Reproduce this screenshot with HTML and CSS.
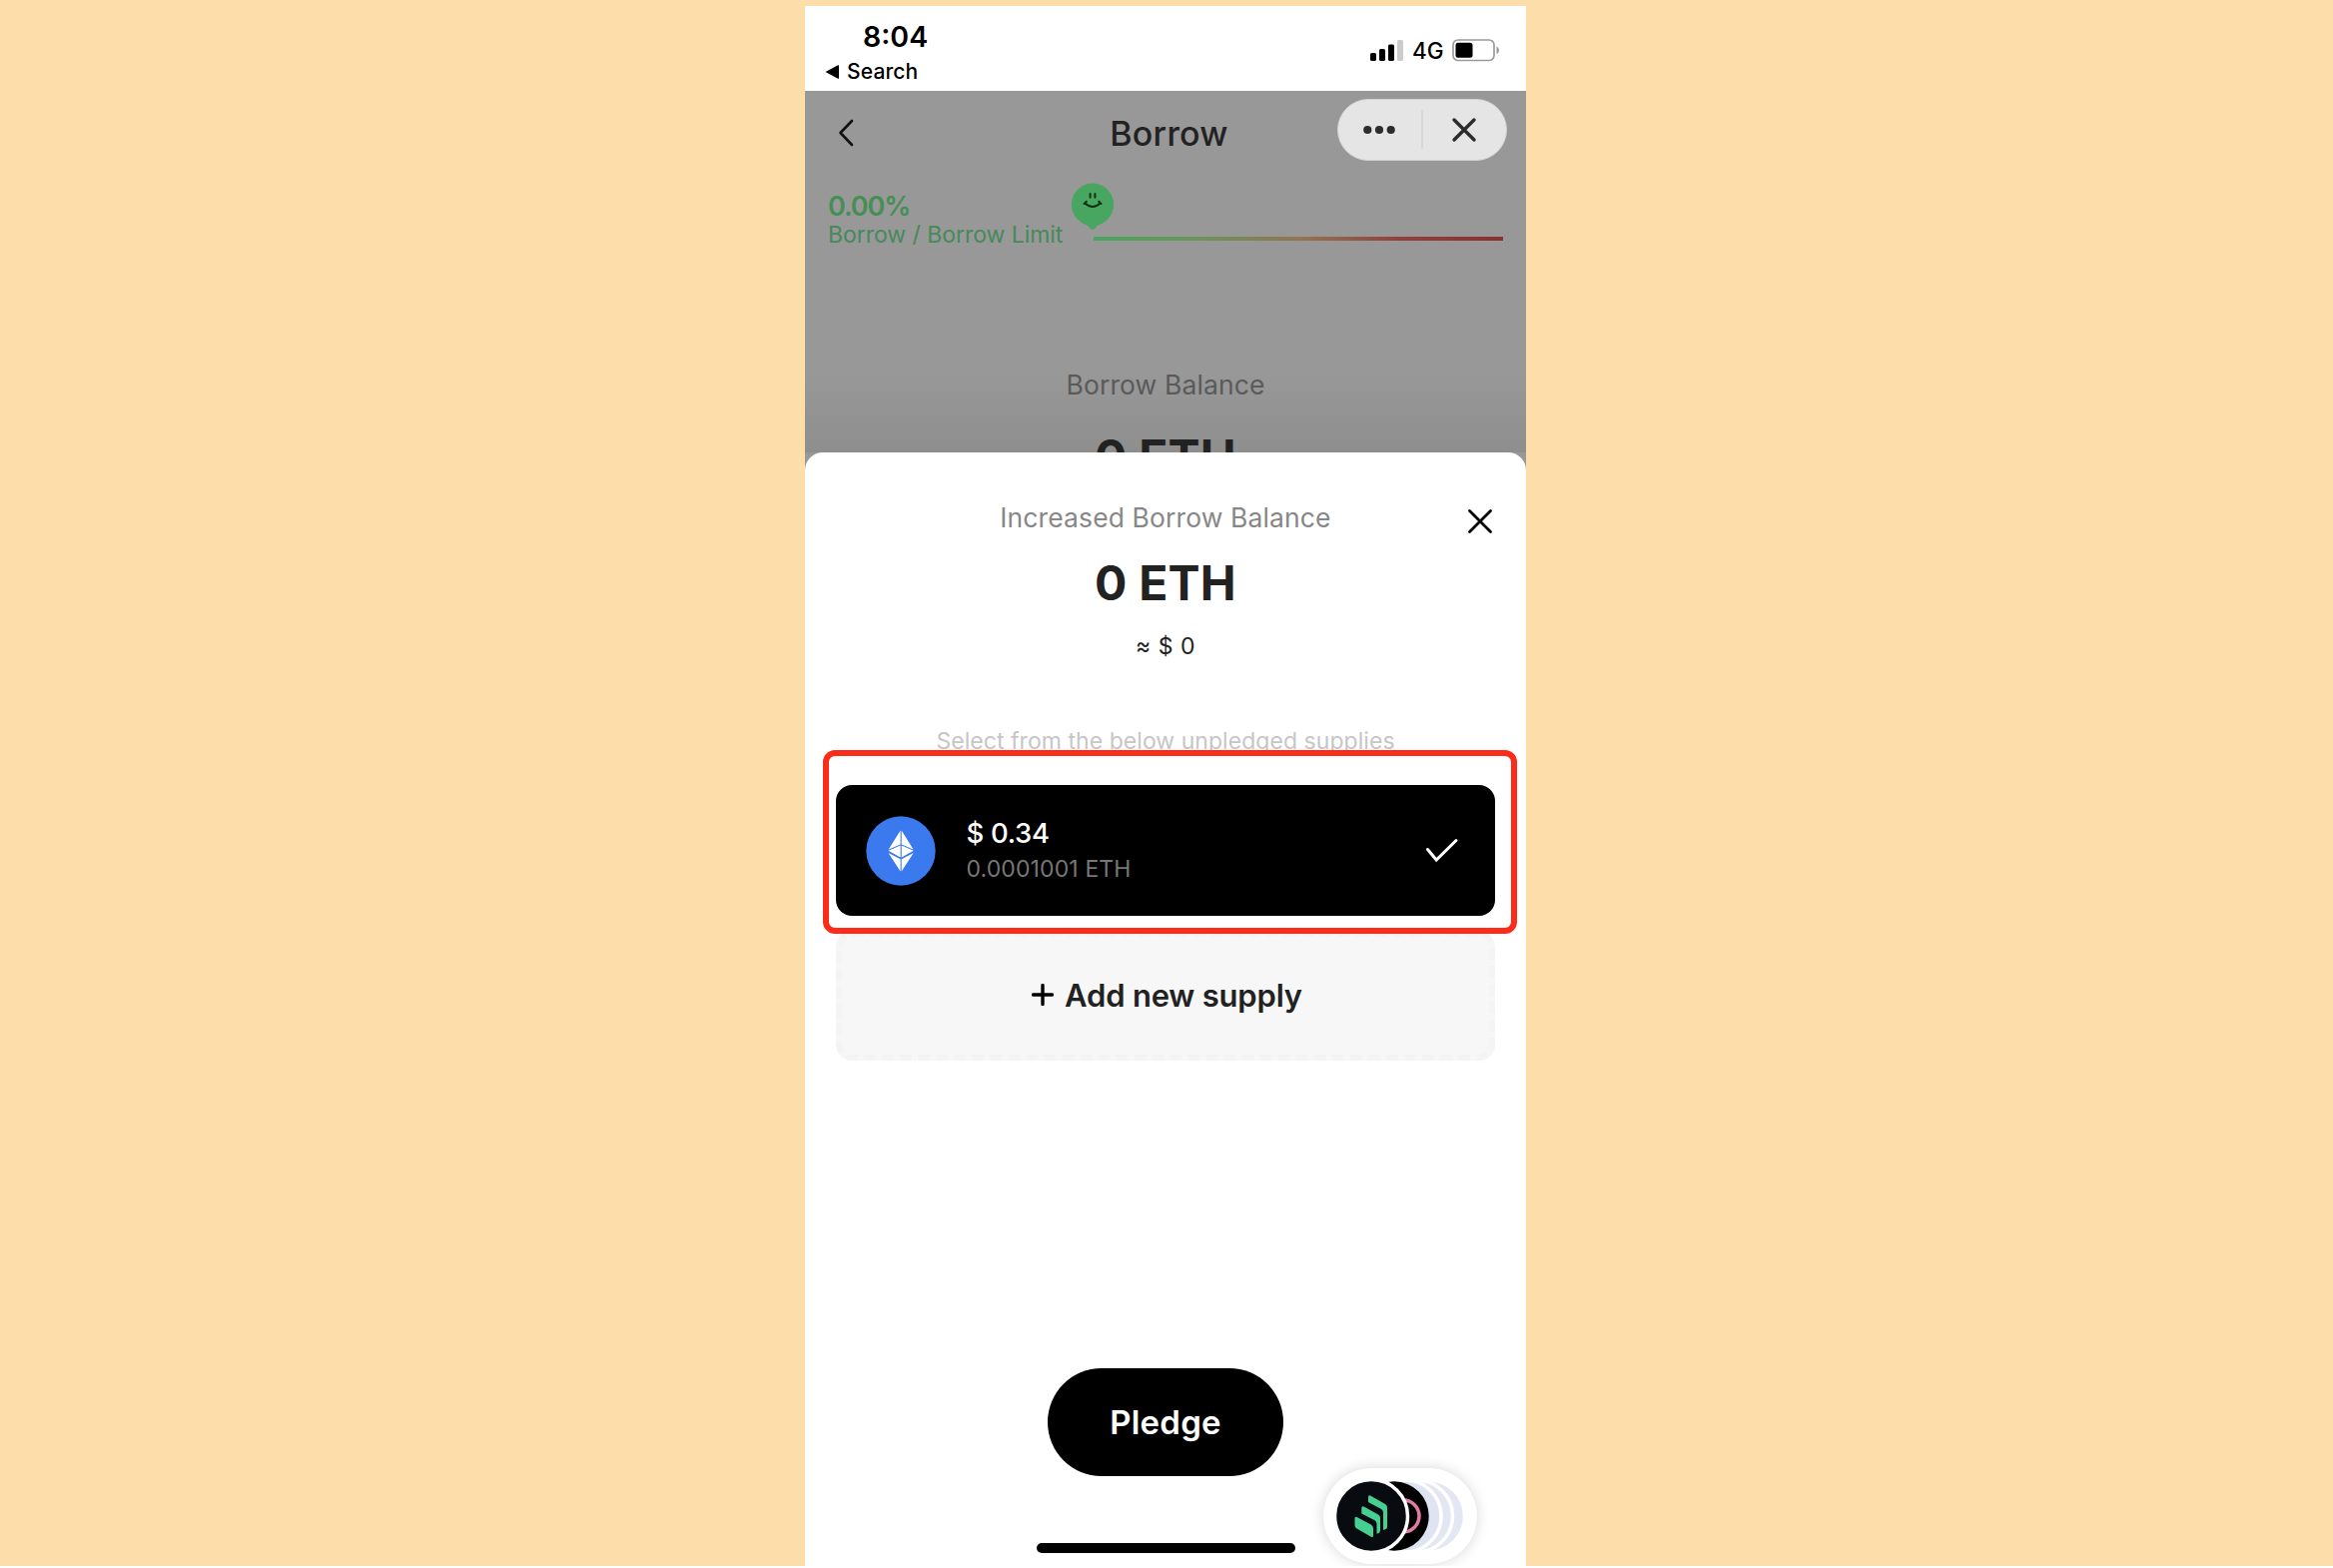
FILE: index.html
```html
<!DOCTYPE html>
<html lang="en">
<head>
<meta charset="utf-8">
<title>Borrow</title>
<link rel="stylesheet" href="styles.css">
</head>
<body>
<main class="phone">
  <header class="status">
    <div class="status-left">
      <div class="clock">8:04</div>
      <div class="back-app">
        <svg width="14" height="14" viewBox="0 0 14 14"><path d="M0.5 7 L13 0.3 Q14 0 14 1.1 V12.9 Q14 14 13 13.7 Z"/></svg>
        <span class="search">Search</span>
      </div>
    </div>
    <div class="status-right">
      <svg width="33" height="21" viewBox="0 0 33 21"><rect x="0" y="13" width="6" height="8" rx="1.6"/><rect x="9" y="9" width="6" height="12" rx="1.6"/><rect x="18" y="4.500" width="6" height="16.500" rx="1.600"/><rect x="27" y="0" width="6" height="21" rx="1.600" fill="#ccc"/></svg>
      <span class="network">4G</span>
      <svg width="48" height="23" viewBox="0 0 48 23"><rect x="1" y="1" width="41" height="20.500" rx="5" fill="none" stroke="#9b9b9b" stroke-width="1.700"/><rect x="3.500" y="3.800" width="17" height="15" rx="2.500"/><path d="M44.500 7.500 Q47 8.500 47 11.300 T44.500 15 Z" fill="#999"/></svg>
    </div>
  </header>
  <section class="screen">
    <nav class="topbar">
      <svg class="chevron" width="16" height="28" viewBox="0 0 16 28"><path d="M14 2 L2.500 14 L14 26"/></svg>
      <h1 class="title"><span>Borrow</span></h1>
    </nav>
    <div class="capsule">
      <svg class="dots" width="32" height="10" viewBox="0 0 32 10"><circle cx="4.300" cy="5" r="4.100"/><circle cx="16" cy="5" r="4.100"/><circle cx="27.700" cy="5" r="4.100"/></svg>
      <span class="divider"></span>
      <svg class="close" width="26" height="26" viewBox="0 0 26 26"><path d="M3 3 L23 23 M23 3 L3 23"/></svg>
    </div>
    <div class="meter">
      <div class="meter-text">
        <div class="percent">0.00%</div>
        <div class="limit">Borrow / Borrow Limit</div>
      </div>
      <div class="track">
        <svg class="pin" width="44" height="48" viewBox="0 0 44 48"><path class="pin-body" d="M22 0.500 A21.300 21.300 0 0 1 32 40.500 Q27 42 24 46 Q22 48 20 46 Q17 42 12 40.500 A21.300 21.300 0 0 1 22 0.500 Z"/><path class="pin-face" d="M19.600 11 V14.800 M24.400 11 V14.800 M14.500 20.500 Q22 27.500 29.500 20.500 M13.500 21 L15.800 18.800 M30.500 21 L28.200 18.800"/></svg>
        <div class="bar"></div>
      </div>
    </div>
    <div class="balance">
      <div class="label dim">Borrow Balance</div>
      <div class="amount">0 ETH</div>
    </div>
    <section class="sheet">
      <svg class="sheet-close" width="26" height="26" viewBox="0 0 26 26"><path d="M2.500 2.500 L23.500 23.500 M23.500 2.500 L2.500 23.500"/></svg>
      <div class="label increased">Increased Borrow Balance</div>
      <div class="amount">0 ETH</div>
      <div class="fiat">≈ $ 0</div>
      <div class="hint">Select from the below unpledged supplies</div>
      <div class="supply">
        <svg width="70" height="70" viewBox="0 0 70 70"><circle cx="35" cy="35" r="34.700" fill="#3a79ee"/><path fill="#fff" d="M34.600 14.500 V28.500 L22.700 33.500 Z M35.700 14.500 V28.500 L47.500 33.500 Z M34.600 29.500 V41.500 L22.500 34.800 Z M35.700 29.500 V41.500 L47.700 34.800 Z M34.600 43.300 V55.500 L22.500 37 Z M35.700 43.300 V55.500 L47.700 37 Z"/></svg>
        <div class="supply-text">
          <div class="usd">$ 0.34</div>
          <div class="eth">0.0001001 ETH</div>
        </div>
        <svg width="34" height="26" viewBox="0 0 34 26"><path class="tick" d="M2.500 11.500 L11.200 22 L31 2.500"/></svg>
        <div class="highlight"></div>
      </div>
      <div class="add">
        <svg width="22" height="22" viewBox="0 0 22 22"><path class="plus" d="M11 1.500 V20.500 M1.500 11 H20.500"/></svg>
        <span class="add-text">Add new supply</span>
      </div>
      <div class="pledge"><span>Pledge</span></div>
      <div class="home"></div>
      <div class="apps">
        <svg width="154" height="96" viewBox="0 0 154 96">
          <g stroke="#fff" stroke-width="3.500">
            <circle cx="105.500" cy="48" r="36" fill="#e3e7f4"/>
            <circle cx="93.500" cy="48" r="36" fill="#e3e7f4"/>
            <circle cx="82" cy="48" r="36" fill="#dfe4f3"/>
          </g>
          <circle cx="71" cy="48" r="34.700"/>
          <circle cx="80" cy="48" r="16" fill="none" stroke="#e07ba4" stroke-width="3.500"/>
          <circle cx="48" cy="48" r="36.500" fill="#080b10" stroke="#fff" stroke-width="3.500"/>
          <g fill="#45cf91">
            <path d="M45 29 Q45 26.500 47.500 27.700 L62 36 Q64 37.300 64 39.500 V59 Q64 61 61.500 61.500 L60 62 V44.500 Q60 42 58 41 L45 34 Z"/>
            <path d="M38.300 40 Q38.300 37.300 41 38.700 L55 46.500 Q57 47.700 57 50 V62.500 Q57 64.500 55 65.200 L53.500 65.800 V56 Q53.500 53.500 51.500 52.300 L38.300 45.500 Z"/>
            <path d="M31.500 50.500 Q31.500 48 34 49.200 L47.800 56.500 Q50 58 50 60 V67.500 Q50 70 47.800 68.800 L33.500 60.500 Q31.500 59.500 31.500 57 Z"/>
          </g>
        </svg>
      </div>
    </section>
  </section>
</main>
</body>
</html>
```
FILE: styles.css
```css
* { box-sizing: border-box; }
html { background: #fff; }
body {
  margin: 0;
  height: 1568px;
  padding-top: 6px;
  overflow: hidden;
  background: #fddda9;
  font-family: Inter, "Liberation Sans", sans-serif;
  color: #222;
  white-space: nowrap;
}
svg { display: block; flex: none; }
.phone {
  width: 722px;
  height: 1562px;
  margin-left: 806px;
  display: flex;
  flex-direction: column;
  background: #fff;
  overflow: hidden;
}
.status {
  height: 84.500px;
  flex: none;
  display: flex;
  justify-content: space-between;
  padding: 14px 26px 0 20px;
  color: #000;
}
.clock { font-size: 28.500px; font-weight: 600; line-height: 34px; padding-left: 38px; }
.back-app { display: flex; align-items: center; gap: 8px; font-size: 21px; font-weight: 500; line-height: 36px; }
.search { letter-spacing: 0.150px; }
.status-right { display: flex; align-items: center; height: 61px; gap: 9px; }
.network { font-size: 22.500px; font-weight: 500; line-height: 24px; width: 31px; }
.screen { position: relative; flex: 1; background: #989898; }
.topbar { display: flex; align-items: center; height: 85px; padding-left: 33px; }
.chevron path { fill: none; stroke: #111; stroke-width: 2.600; stroke-linecap: round; stroke-linejoin: round; }
.title { flex: 1; margin: 2px 42px 0 0; text-align: center; font-size: 34px; font-weight: 500; line-height: 40px; letter-spacing: 0.200px; }
.capsule {
  position: absolute;
  top: 8px;
  left: 533px;
  width: 169.500px;
  height: 62px;
  border: 1px solid #d2d2d2;
  border-radius: 31px;
  background: #e5e5e5;
  display: flex;
  align-items: center;
  padding-left: 25px;
}
.dots { fill: #2c2c2c; }
.divider { width: 1.500px; height: 39px; margin-left: 26px; background: #d8d8d8; }
.close { margin-left: 28px; fill: none; stroke: #2c2c2c; stroke-width: 3.400; stroke-linecap: round; }
.meter { display: flex; height: 80px; padding: 6.500px 23px 0 23px; }
.meter-text { width: 266px; color: #47895a; }
.percent { font-size: 27px; font-weight: 600; line-height: 32px; padding-top: 9px; letter-spacing: -1.100px; color: #458f55; }
.limit { font-size: 23px; line-height: 26px; margin-top: -1px; letter-spacing: -0.040px; }
.track { position: relative; flex: 1; padding-top: 55px; }
.bar { height: 4px; background: linear-gradient(90deg, #46a660 0%, #6b9559 25%, #927552 50%, #933f3d 75%, #8b3030 100%); }
.pin { position: absolute; left: -23px; top: 0.500px; }
.pin-body { fill: #47a65f; }
.pin-face { fill: none; stroke: #123018; stroke-width: 2; stroke-linecap: round; }
.balance {
  height: 197.500px;
  padding-top: 113px;
  text-align: center;
  overflow: hidden;
  background: linear-gradient(180deg, #989898 0%, #989898 60%, #8e8e8e 100%);
}
.label { font-size: 26.500px; line-height: 32px; letter-spacing: 0.110px; color: #878787; }
.label.dim { color: #5a5a5a; }
.amount { font-size: 48px; font-weight: 700; line-height: 58px; letter-spacing: 0.200px; }
.balance .amount { margin-top: 28.500px; }
.sheet {
  position: absolute;
  left: 0;
  right: 0;
  top: 362px;
  bottom: 0;
  border-radius: 18px 18px 0 0;
  background: #fff;
  padding: 49px 31px 0;
  text-align: center;
  display: flex;
  flex-direction: column;
}
.sheet-close { position: absolute; right: 33px; top: 56px; fill: none; stroke: #000; stroke-width: 2.800; stroke-linecap: round; }
.sheet .amount { margin-top: 21px; }
.fiat { font-size: 23px; line-height: 28px; margin-top: 20.500px; letter-spacing: 0.500px; }
.hint { font-size: 23px; line-height: 28px; margin-top: 66.500px; letter-spacing: 0.050px; color: #c6c6c6; }
.supply {
  position: relative;
  height: 131px;
  margin-top: 30.500px;
  display: flex;
  align-items: center;
  padding: 0 36px 0 30px;
  border-radius: 16px;
  background: #000;
  text-align: left;
}
.supply-text { flex: 1; padding-left: 30.500px; margin-top: -1px; }
.usd { font-size: 27.500px; font-weight: 500; line-height: 37px; letter-spacing: -0.300px; color: #fff; }
.eth { font-size: 23px; line-height: 34px; letter-spacing: 0.120px; color: #777; }
.highlight {
  position: absolute;
  left: -13px;
  top: -35px;
  width: 695px;
  height: 184px;
  border: 6.500px solid #fb2c19;
  border-radius: 12px;
}
.add {
  height: 130px;
  margin-top: 15px;
  display: flex;
  align-items: center;
  justify-content: center;
  gap: 11px;
  padding: 0 0 2px 3px;
  border: 6px dashed #f4f4f4;
  border-radius: 16px;
  background: #f7f7f7;
  font-size: 31px;
  font-weight: 600;
  letter-spacing: -0.200px;
}
.plus { stroke: #000; stroke-width: 3.400; stroke-linecap: round; }
.tick { fill: none; stroke: #fff; stroke-width: 3; stroke-linecap: round; }
.pledge {
  align-self: center;
  width: 236px;
  height: 108.500px;
  margin-top: 307.500px;
  border-radius: 54.500px;
  background: #000;
  color: #fff;
  font-size: 33px;
  font-weight: 600;
  line-height: 108px;
  letter-spacing: 0.200px;
}
.home { align-self: center; width: 259px; height: 10px; margin-top: 66.500px; border-radius: 5px; background: #000; }
.apps {
  position: absolute;
  left: 519px;
  top: 1017px;
  width: 154px;
  height: 96px;
  border-radius: 48px;
  background: #fff;
  box-shadow: 0 0 14px rgba(0, 0, 0, 0.16);
}
```
